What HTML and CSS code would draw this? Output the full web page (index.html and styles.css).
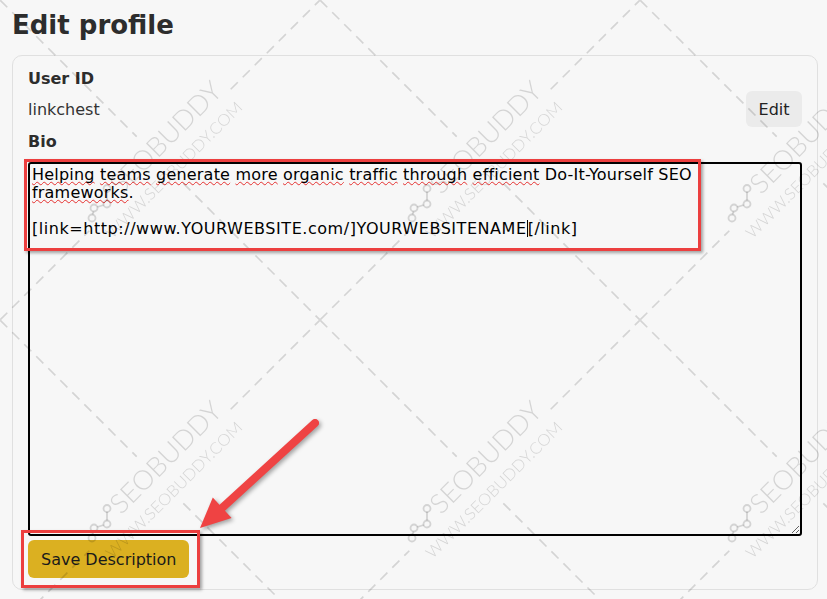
FILE: index.html
```html
<!DOCTYPE html>
<html lang="en">
<head>
<meta charset="utf-8">
<title>Edit profile</title>
<link rel="stylesheet" href="styles.css">
</head>
<body>
<div class="page">
  <h1 class="title">Edit profile</h1>
  <section class="card">
    <div class="label">User ID</div>
    <div class="id-row">
      <span class="value">linkchest</span>
      <button class="btn-edit" type="button">Edit</button>
    </div>
    <div class="label bio-label">Bio</div>
    <div class="bio" role="textbox" aria-multiline="true"><span class="sp">Helping</span> <span class="sp">teams</span> <span class="sp">generate</span> <span class="sp">more</span> <span class="sp">organic</span> <span class="sp">traffic</span> <span class="sp">through</span> <span class="sp">efficient</span> Do-It-Yourself SEO <span class="sp">frameworks</span>.<br><br><span class="bio-link">[link=http://www.YOURWEBSITE.com/]YOURWEBSITENAME<span class="caret"></span>[/link]</span></div>
    <button class="btn-save" type="button">Save Description</button>
  </section>
</div>

<svg class="watermark" width="827" height="599" aria-hidden="true">
  <defs>
    <pattern id="wm" width="320" height="320" patternUnits="userSpaceOnUse">
      <g transform="translate(160 160) rotate(-45)">
        <path class="wm-line" d="M-226 0H-100M100 0H226M0 -226V-33M0 33V226"/>
        <text class="wm-big" x="20" y="-2.5" text-anchor="middle" textLength="145" lengthAdjust="spacingAndGlyphs">SEOBUDDY</text>
        <text class="wm-small" x="3" y="22.5" text-anchor="middle" textLength="185" lengthAdjust="spacingAndGlyphs">WWW.SEOBUDDY.COM</text>
      </g>
      <g class="wm-logo" transform="translate(100 204)">
        <path d="M7 -12V-3.5M3.6 1L-2.6 3M-6.4 7.5L-7.6 10.5"/>
        <circle cx="7" cy="-15.5" r="3.5"/>
        <circle cx="7" cy="0" r="3.5"/>
        <circle cx="-6" cy="4" r="3.5"/>
        <circle cx="-8" cy="14" r="3.5"/>
      </g>
    </pattern>
  </defs>
  <rect width="827" height="599" fill="url(#wm)"/>
</svg>

<div class="annot annot-text"></div>
<div class="annot annot-save"></div>

<svg class="arrow" width="827" height="599" aria-hidden="true">
  <line x1="315" y1="423" x2="222" y2="508" stroke="#ef4343" stroke-width="8" stroke-linecap="round"/>
  <polygon points="200,528 212.8,497.5 231.6,518.1" fill="#ef4343"/>
</svg>
</body>
</html>
```

FILE: styles.css
```css
html, body {
  margin: 0;
  background: #f7f7f7;
}

body {
  font-family: "DejaVu Sans", Verdana, sans-serif;
  color: #333;
  overflow: hidden;
}

.page {
  padding: 10px 9px 0 12px;
}

.title {
  margin: 0 0 15px;
  font-size: 26px;
  line-height: 30px;
  font-weight: 700;
  color: #2d2d2d;
}

.card {
  border: 1px solid #e0e0e0;
  border-radius: 10px;
  padding: 13px 15px 11px;
}

.label {
  font-size: 16px;
  line-height: 19px;
  font-weight: 700;
  color: #2d2d2d;
}

.id-row {
  display: flex;
  justify-content: space-between;
  align-items: center;
  margin-top: 3px;
}

.value {
  font-size: 16px;
  line-height: 19px;
  color: #333;
}

.btn-edit {
  height: 36px;
  padding: 0 12.5px;
  border: 0;
  border-radius: 6px;
  background: #ebebeb;
  font-family: "DejaVu Sans", Verdana, sans-serif;
  font-size: 16px;
  color: #222;
}

.bio-label {
  margin-top: 5px;
}

.bio {
  margin-top: 11px;
  box-sizing: border-box;
  height: 374px;
  border: 2px solid #000;
  border-radius: 3px;
  padding: 2px 60px 2px 2px;
  font-size: 16px;
  line-height: 18px;
  letter-spacing: 0.2px;
  color: #000;
  resize: vertical;
  overflow: auto;
}

.bio-link {
  letter-spacing: 0.55px;
}

.sp {
  text-decoration: underline wavy #e5302f;
  text-decoration-thickness: 1px;
  text-underline-offset: 1px;
  text-decoration-skip-ink: none;
}

.caret {
  display: inline-block;
  width: 0;
  height: 17px;
  border-left: 1px solid #000;
  vertical-align: -3px;
}

.btn-save {
  display: block;
  margin-top: 4px;
  height: 38px;
  padding: 0 13px;
  border: 0;
  border-radius: 6px;
  background: #dbb021;
  font-family: "DejaVu Sans", Verdana, sans-serif;
  font-size: 16px;
  color: #1a1a1a;
}

.watermark {
  position: fixed;
  left: 0;
  top: 0;
  pointer-events: none;
}

.wm-line {
  fill: none;
  stroke: #000;
  stroke-opacity: 0.14;
  stroke-width: 1.6;
  stroke-dasharray: 10 7;
}

.wm-big {
  font-family: "Lato", "DejaVu Sans", sans-serif;
  font-weight: 300;
  font-size: 27px;
  fill: #000;
  fill-opacity: 0.14;
}

.wm-small {
  font-family: "Lato", "DejaVu Sans", sans-serif;
  font-weight: 300;
  font-size: 16px;
  fill: #000;
  fill-opacity: 0.14;
}

.wm-logo {
  fill: none;
  stroke: #000;
  stroke-opacity: 0.14;
  stroke-width: 1.8;
}

.annot {
  position: absolute;
  box-sizing: border-box;
  border: 3px solid #ec3f3f;
  box-shadow: 2px 2px 3px rgba(0, 0, 0, 0.35);
  pointer-events: none;
}

.annot-text {
  left: 24px;
  top: 159px;
  width: 677px;
  height: 92px;
}

.annot-save {
  left: 21px;
  top: 530px;
  width: 179px;
  height: 58px;
}

.arrow {
  position: fixed;
  left: 0;
  top: 0;
  pointer-events: none;
  filter: drop-shadow(2px 2px 2px rgba(0, 0, 0, 0.35));
}
```
